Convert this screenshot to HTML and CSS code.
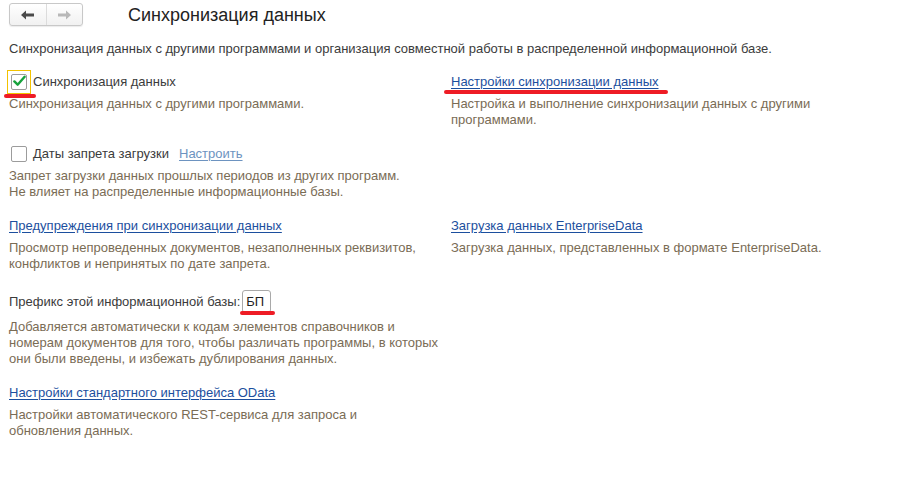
FILE: index.html
```html
<!DOCTYPE html>
<html lang="ru">
<head>
  <meta charset="UTF-8">
  <title>Синхронизация данных</title>
  <link rel="stylesheet" href="styles.css">
</head>
<body>
  <div class="page">
    <div class="header">
      <div class="nav">
        <button class="nav-btn">
          <svg width="14" height="10" viewBox="0 0 14 10"><path d="M0 5 L5 0.5 L5 3.5 L13 3.5 L13 6.5 L5 6.5 L5 9.5 Z" fill="#4a4a4a"/></svg>
        </button>
        <button class="nav-btn">
          <svg width="14" height="10" viewBox="0 0 14 10"><path d="M14 5 L9 0.5 L9 3.5 L1 3.5 L1 6.5 L9 6.5 L9 9.5 Z" fill="#b8b8b8"/></svg>
        </button>
      </div>
      <h1>Синхронизация данных</h1>
    </div>

    <p class="intro">Синхронизация данных с другими программами и организация совместной работы в распределенной информационной базе.</p>

    <div class="grid">
      <div class="item">
        <label class="check-row">
          <span class="focus marked">
            <span class="box checked">
              <svg width="14" height="12" viewBox="0 0 14 12"><path d="M1.5 6.5 L5 10 L12.5 1.5" fill="none" stroke="#17a23c" stroke-width="2.6" stroke-linecap="round" stroke-linejoin="round"/></svg>
            </span>
          </span>
          <span class="label first-label">Синхронизация данных</span>
        </label>
        <div class="desc">Синхронизация данных с другими программами.</div>
      </div>
      <div class="item">
        <a class="link marked-link" href="#">Настройки синхронизации данных</a>
        <div class="desc">Настройка и выполнение синхронизации данных с другими<br>программами.</div>
      </div>

      <div class="item">
        <label class="check-row">
          <span class="box plain"></span>
          <span class="label">Даты запрета загрузки</span>
          <a class="link small-link" href="#">Настроить</a>
        </label>
        <div class="desc">Запрет загрузки данных прошлых периодов из других программ.<br>Не влияет на распределенные информационные базы.</div>
      </div>
      <div class="item"></div>

      <div class="item">
        <a class="link" href="#">Предупреждения при синхронизации данных</a>
        <div class="desc">Просмотр непроведенных документов, незаполненных реквизитов,<br>конфликтов и непринятых по дате запрета.</div>
      </div>
      <div class="item">
        <a class="link" href="#">Загрузка данных EnterpriseData</a>
        <div class="desc">Загрузка данных, представленных в формате EnterpriseData.</div>
      </div>

      <div class="item prefix-item">
        <div class="prefix-row">
          <span class="label">Префикс этой информационной базы:</span>
          <span class="prefix marked-input">БП</span>
        </div>
        <div class="desc">Добавляется автоматически к кодам элементов справочников и<br>номерам документов для того, чтобы различать программы, в которых<br>они были введены, и избежать дублирования данных.</div>
      </div>
      <div class="item"></div>

      <div class="item">
        <a class="link" href="#">Настройки стандартного интерфейса OData</a>
        <div class="desc">Настройки автоматического REST-сервиса для запроса и<br>обновления данных.</div>
      </div>
      <div class="item"></div>
    </div>
  </div>
</body>
</html>
```

FILE: styles.css
```css
:root {
  --text: #3b3b3b;
  --desc: #7a6c55;
  --link: #1c4f9e;
  --mark: #ee1c25;
}

body {
  margin: 0;
  background: #fff;
  font-family: "Liberation Sans", Arial, sans-serif;
  font-size: 13px;
  line-height: 16px;
  color: var(--text);
}

.page {
  padding: 3px 0 0 9px;
}

.header {
  display: flex;
  align-items: center;
  height: 23px;
}

.nav {
  display: flex;
  width: 72px;
  height: 21px;
  border: 1px solid #c8c8c8;
  border-radius: 3px;
  background: linear-gradient(#ffffff, #f1f1f1);
  box-shadow: 0 1px 1px rgba(0, 0, 0, 0.08);
}

.nav-btn {
  flex: 1;
  border: none;
  background: none;
  padding: 0;
  display: flex;
  align-items: center;
  justify-content: center;
}

.nav-btn + .nav-btn {
  border-left: 1px solid #dcdcdc;
}

h1 {
  margin: 0 0 0 45px;
  font-size: 18px;
  font-weight: normal;
  color: #222;
  line-height: 22px;
}

.intro {
  margin: 15px 0 0;
}

.grid {
  display: grid;
  grid-template-columns: 442px 1fr;
  row-gap: 18px;
  margin-top: 17px;
}

.desc {
  color: var(--desc);
  margin-top: 6px;
  white-space: nowrap;
}

.link {
  color: var(--link);
  text-decoration: underline;
  text-underline-offset: 2px;
}

.check-row {
  display: flex;
  align-items: center;
  height: 16px;
}

.focus {
  display: flex;
  padding: 3px;
  margin: -4px 0 -4px -2px;
  border: 1px solid #f2c200;
}

.first-label {
  margin-left: 2px;
}

.box {
  width: 14px;
  height: 14px;
  border: 1px solid #9c9c9c;
  border-radius: 2px;
  background: #fff;
  display: flex;
  align-items: center;
  justify-content: center;
}

.box.plain {
  margin-left: 2px;
  margin-right: 6px;
}

.checked svg {
  margin-top: -2px;
  margin-left: 1px;
}

.small-link {
  margin-left: 10px;
  color: #6d93c0;
}

.prefix-row {
  display: flex;
  align-items: center;
  height: 23px;
}

.prefix {
  margin-left: 2px;
  width: 24px;
  height: 21px;
  line-height: 21px;
  padding-left: 3px;
  border: 1px solid #a9a9a9;
  border-radius: 3px;
  color: #222;
}

.prefix-item .desc {
  margin-top: 6px;
}

/* red marker strokes over the screenshot */
.marked,
.marked-link,
.marked-input {
  position: relative;
}

.marked::after,
.marked-link::after,
.marked-input::after {
  content: "";
  position: absolute;
  height: 4px;
  border-radius: 2px;
  background: var(--mark);
}

.marked::after {
  left: -4px;
  width: 32px;
  bottom: -5px;
}

.marked-link::after {
  left: -7px;
  width: 224px;
  bottom: -5px;
}

.marked-input::after {
  left: -3px;
  width: 35px;
  bottom: -3px;
}
```
